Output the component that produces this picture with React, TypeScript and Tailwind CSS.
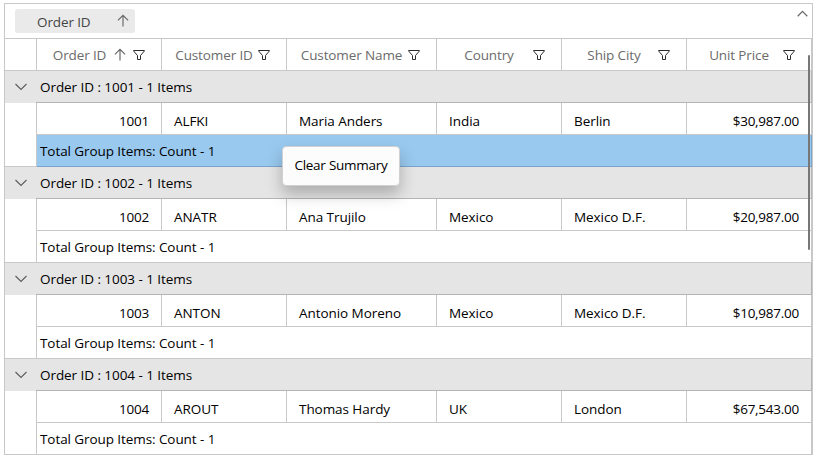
import React from 'react';

type Order = { id: string; customerId: string; name: string; country: string; city: string; price: string };

const orders: Order[] = [
  { id: '1001', customerId: 'ALFKI', name: 'Maria Anders', country: 'India', city: 'Berlin', price: '$30,987.00' },
  { id: '1002', customerId: 'ANATR', name: 'Ana Trujilo', country: 'Mexico', city: 'Mexico D.F.', price: '$20,987.00' },
  { id: '1003', customerId: 'ANTON', name: 'Antonio Moreno', country: 'Mexico', city: 'Mexico D.F.', price: '$10,987.00' },
  { id: '1004', customerId: 'AROUT', name: 'Thomas Hardy', country: 'UK', city: 'London', price: '$67,543.00' },
];

const columns = 'grid grid-cols-[125px_125px_150px_125px_125px_125px]';

function ArrowUp() {
  return (
    <svg className="h-3.5 w-3 shrink-0" viewBox="0 0 12 14" fill="none" stroke="#6b6b6b" strokeWidth="1.2">
      <path d="M6 1.3V12.5M0.9 6.4L6 1.3L11.1 6.4" />
    </svg>
  );
}

function Funnel() {
  return (
    <svg className="h-3 w-3 shrink-0" viewBox="0 0 12 12" fill="none" stroke="#2b2b2b" strokeWidth="1">
      <path d="M0.6 1.5H11.4V2L7.5 6.5V10.5H4.5V6.5L0.6 2Z" />
    </svg>
  );
}

function ChevronDown() {
  return (
    <svg className="h-2 w-3" viewBox="0 0 12 8" fill="none" stroke="#5c5c5c" strokeWidth="1.1">
      <path d="M0.5 1L6 6.5L11.5 1" />
    </svg>
  );
}

function HeaderCell({ label, sorted }: { label: string; sorted?: boolean }) {
  return (
    <div className="flex h-[31px] items-center border-r border-[#c8c8c8] pr-[16px] pl-[8px]">
      <span className="flex-1 pt-px text-center tracking-[-0.12px] whitespace-nowrap text-[#6b6b6b]">{label}</span>
      {sorted && <span className="mr-[7px] flex"><ArrowUp /></span>}
      <Funnel />
    </div>
  );
}

function Cell({ children, right }: { children: React.ReactNode; right?: boolean }) {
  return (
    <div className={`h-[31px] border-r border-[#c8c8c8] px-3 pt-[5px] leading-[26px] whitespace-nowrap ${right ? 'text-right tracking-[-0.25px]' : 'tracking-[-0.06px]'}`}>
      {children}
    </div>
  );
}

function Group({ order, selected }: { order: Order; selected?: boolean }) {
  return (
    <section>
      <div className="flex h-8 bg-[#e5e5e5]">
        <div className="flex w-[31px] items-center justify-center pl-[1px]"><ChevronDown /></div>
        <div className="flex-1 border-r border-b border-[#b4b4b4] pl-1 leading-[33px] tracking-[-0.06px] whitespace-nowrap">Order ID : {order.id} - 1 Items</div>
      </div>
      <div className="flex h-16">
        <div className="w-8 border-r border-b border-[#c8c8c8]" />
        <div className="flex-1">
          <div className={`${columns} h-8 border-b border-[#c8c8c8]`}>
            <Cell right>{order.id}</Cell>
            <Cell>{order.customerId}</Cell>
            <Cell>{order.name}</Cell>
            <Cell>{order.country}</Cell>
            <Cell>{order.city}</Cell>
            <Cell right>{order.price}</Cell>
          </div>
          <div className={`h-8 border-r border-b pl-[3px] leading-[32px] tracking-[-0.08px] whitespace-nowrap ${selected ? 'border-[#7ba4cc] bg-[#99c9ef]' : 'border-[#c8c8c8]'}`}>
            Total Group Items: Count - 1
          </div>
        </div>
      </div>
    </section>
  );
}

export default function App() {
  return (
    <main className="relative h-[460px] w-[817px] overflow-hidden bg-white pt-[3px] pl-1 font-['Open_Sans','Noto_Sans',sans-serif] text-[13.5px] text-black">
      <div className="h-[452px] w-[809px] border-t border-r border-l border-[#c8c8c8]">
        <header className="flex h-[35px] items-start justify-between border-b border-[#c8c8c8] pl-[10px]">
          <div className="mt-[5px] flex h-6 w-[120px] items-center justify-between rounded-[3px] bg-[#eaeaea] pr-[6px] pl-[22px] text-[#444]">
            <span className="pt-0.5 tracking-[-0.12px] whitespace-nowrap">Order ID</span>
            <ArrowUp />
          </div>
          <svg className="mt-[6px] mr-1 h-[7px] w-[11px]" viewBox="0 0 11 7" fill="none" stroke="#6b6b6b" strokeWidth="1.3">
            <path d="M0.7 6.2L5.5 1.4L10.3 6.2" />
          </svg>
        </header>
        <div className="flex h-8 border-b border-[#c8c8c8]">
          <div className="w-8 border-r border-[#c8c8c8]" />
          <div className={columns}>
            <HeaderCell label="Order ID" sorted />
            <HeaderCell label="Customer ID" />
            <HeaderCell label="Customer Name" />
            <HeaderCell label="Country" />
            <HeaderCell label="Ship City" />
            <HeaderCell label="Unit Price" />
          </div>
        </div>
        {orders.map((order, i) => <Group key={order.id} order={order} selected={i === 0} />)}
      </div>
      <div className="absolute top-[55px] left-[808px] h-[195px] w-[2px] rounded-full bg-[#777]" />
      <div className="absolute top-[146px] left-[282px] flex h-10 w-[118px] items-center justify-center rounded-[4px] border border-[#d0d0d0] bg-[#fcfcfc] pb-0.5 tracking-[-0.25px] whitespace-nowrap shadow-[0_8px_16px_rgba(0,0,0,0.25)]">
        Clear Summary
      </div>
    </main>
  );
}
